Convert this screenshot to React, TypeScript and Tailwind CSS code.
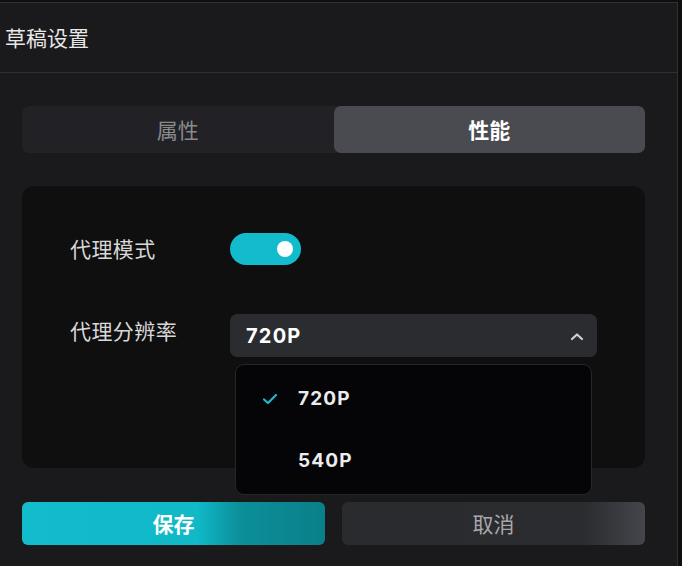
import React from "react";

const cjk = { fontFamily: '"Noto Sans CJK SC", "Noto Sans", sans-serif' };
const latin = { fontFamily: 'Inter, "Noto Sans", sans-serif' };

export default function App() {
  return (
    <div className="w-[682px] h-[566px] bg-[#0e0e0f] pt-[2px] overflow-hidden" style={cjk}>
      <div className="w-[678px] h-[564px] bg-[#1a1a1c] border-t border-r border-[#303033] flex flex-col">
        <div className="h-[70px] border-b border-[#303033] flex items-center pl-[5px] text-[21px] text-[#e8e8e8]">
          草稿设置
        </div>
        <div className="pl-[22px] pt-[33px] flex flex-col">
          <div className="w-[623px] h-[47px] rounded-[7px] bg-[#222226] flex">
            <div className="flex-1 flex items-center justify-center text-[21px] text-[#8a8a8d]">属性</div>
            <div className="flex-1 flex items-center justify-center text-[21px] font-bold text-white bg-[#4a4b50] rounded-[7px]">性能</div>
          </div>
          <div className="w-[623px] h-[282px] mt-[33px] rounded-[12px] bg-[#0f0f10] pl-[48px] pt-[47px] flex flex-col">
            <div className="flex items-center h-[32px]">
              <div className="w-[160px] text-[21px] tracking-[0.02em] text-[#d8d8d8]">代理模式</div>
              <div className="w-[71px] h-[32px] rounded-full bg-[#13bccc] flex items-center justify-end pr-[8px]">
                <div className="w-[16px] h-[16px] rounded-full bg-white" />
              </div>
            </div>
            <div className="flex items-center h-[43px] mt-[49px]">
              <div className="w-[160px] text-[21px] tracking-[0.02em] text-[#d8d8d8] self-start pt-[1px]">代理分辨率</div>
              <div className="relative w-[367px] h-[43px] rounded-[7px] bg-[#2b2c30] flex items-center justify-between pl-[16px] pr-[13px]">
                <span className="text-[20px] font-bold tracking-[0.06em] text-white" style={latin}>720P</span>
                <svg width="14" height="10" viewBox="0 0 14 10" className="mt-[2px]">
                  <path d="M2 7 L7 2.5 L12 7" stroke="#d0d0d0" strokeWidth="2.2" fill="none" strokeLinecap="round" strokeLinejoin="round" />
                </svg>
                <div className="absolute left-[5px] top-[50px] w-[357px] h-[131px] rounded-[9px] bg-[#050507] border border-[#26262a] flex flex-col">
                  <div className="h-[64px] flex items-center pl-[26px] pt-[4px]">
                    <svg width="16" height="12" viewBox="0 0 16 12" className="mr-[20px]">
                      <path d="M2 6.5 L6 10 L14 2" stroke="#20b8cb" strokeWidth="2.2" fill="none" strokeLinecap="round" strokeLinejoin="round" />
                    </svg>
                    <span className="text-[19px] font-bold tracking-[0.06em] text-[#ececec]" style={latin}>720P</span>
                  </div>
                  <div className="h-[64px] flex items-center pl-[62px]">
                    <span className="text-[19px] font-bold tracking-[0.06em] text-[#ececec]" style={latin}>540P</span>
                  </div>
                </div>
              </div>
            </div>
          </div>
          <div className="flex gap-[17px] mt-[34px] w-[623px]">
            <div className="w-[303px] h-[43px] rounded-[6px] flex items-center justify-center text-[21px] font-bold text-white bg-[linear-gradient(90deg,#12bccc_0%,#10b8c8_58%,#0b8f99_72%,#0a7f89_100%)]">
              保存
            </div>
            <div className="w-[303px] h-[43px] rounded-[6px] flex items-center justify-center text-[21px] text-[#a8a8ab] bg-[linear-gradient(90deg,#2a2b2f_0%,#2b2c30_80%,#45464b_100%)]">
              取消
            </div>
          </div>
        </div>
      </div>
    </div>
  );
}
